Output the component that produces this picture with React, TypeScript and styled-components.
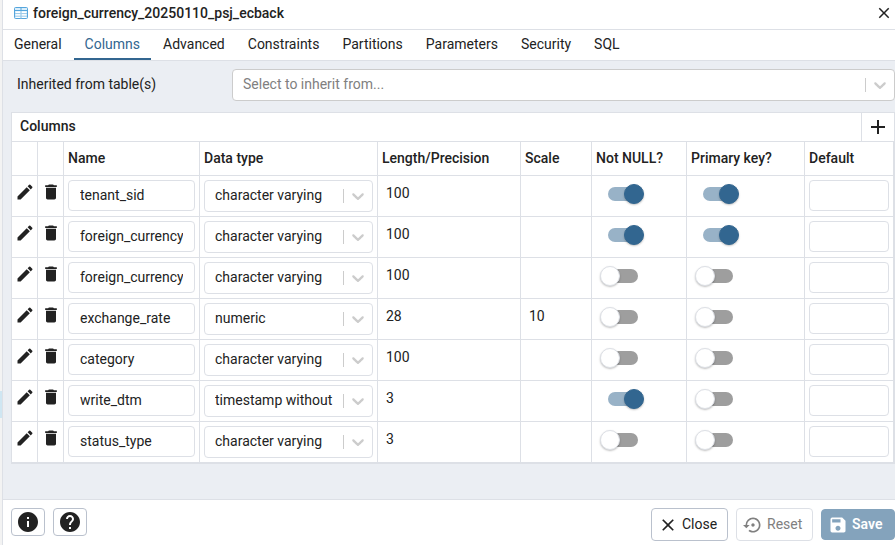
import React, { useState } from "react";
import styled, { createGlobalStyle } from "styled-components";
import {
  MdAdd,
  MdClose,
  MdDelete,
  MdEdit,
  MdHelp,
  MdInfo,
  MdSave,
  MdSettingsBackupRestore,
} from "react-icons/md";

const color = {
  text: "#222222",
  primary: "#326690",
  line: "#dde0e6",
  panel: "#ebeef3",
  control: "#cccccc",
  button: "#bac1cd",
};

const GlobalStyle = createGlobalStyle`
  *, *::before, *::after { box-sizing: border-box; }
  body {
    margin: 0;
    background: #ffffff;
    color: ${color.text};
    font-family: Roboto, "Liberation Sans", sans-serif;
    font-size: 14px;
    line-height: 20px;
  }
  button, input, select { font: inherit; color: inherit; margin: 0; }
`;

const Page = styled.div`
  display: flex;
  min-height: 100vh;
  overflow: hidden;
`;

const Backdrop = styled.div`
  display: flex;
  flex: 0 0 3px;
  flex-direction: column;
  padding-top: 391px;
  background: #f3f3f3;
  border-right: 1px solid ${color.line};
`;

const BackdropSelection = styled.div`
  height: 27px;
  background: #cfe6f2;
`;

const Dialog = styled.main`
  display: flex;
  flex: 1;
  flex-direction: column;
  min-width: 0;
`;

const TitleBar = styled.header`
  display: flex;
  align-items: center;
  gap: 4px;
  height: 30px;
  padding: 0 2px 3px 11px;
  border-bottom: 1px solid ${color.line};
`;

const Title = styled.h1`
  flex: 1;
  margin: 0;
  font-size: 14px;
  font-weight: 500;
`;

const PlainButton = styled.button`
  display: flex;
  align-items: center;
  justify-content: center;
  padding: 0;
  border: 0;
  background: none;
  cursor: pointer;
`;

const TabBar = styled.nav`
  display: flex;
  gap: 1px;
  height: 31px;
  border-bottom: 1px solid ${color.line};
`;

const Tab = styled.button<{ $active: boolean }>`
  padding: 0 11px;
  border: 0;
  border-bottom: 2px solid ${(p) => (p.$active ? color.primary : "transparent")};
  background: none;
  color: ${(p) => (p.$active ? color.primary : color.text)};
  cursor: pointer;
`;

const Body = styled.section`
  flex: 1;
  padding: 8px 0 35px 8px;
  background: ${color.panel};
`;

const Field = styled.div`
  display: flex;
  margin-bottom: 11px;
`;

const FieldLabel = styled.label`
  flex: 0 0 221px;
  padding: 5px 6px;
`;

const SelectBox = styled.div<{ $strong?: boolean }>`
  display: flex;
  position: relative;
  flex: 1;
  height: 32px;
  border: 1px solid ${(p) => (p.$strong ? color.control : color.line)};
  border-radius: 4px;
  background: #ffffff;
  color: ${(p) => (p.$strong ? "#808080" : color.text)};
`;

const Select = styled.select`
  width: 100%;
  min-width: 0;
  padding: 0 0 2px;
  border: 0;
  border-left: 10px solid transparent;
  border-right: 38px solid transparent;
  outline: 0;
  background: transparent;
  appearance: none;
`;

const SelectArrow = styled.span`
  display: flex;
  position: absolute;
  top: 8px;
  right: 4px;
  align-items: center;
  height: 14px;
  padding-left: 4px;
  border-left: 1px solid ${color.control};
  color: ${color.control};
  pointer-events: none;
`;

const Grid = styled.section`
  border: 1px solid ${color.line};
  background: #ffffff;
`;

const GridHeader = styled.div`
  display: flex;
  height: 29px;
  border-bottom: 1px solid ${color.line};
`;

const GridTitle = styled.h2`
  flex: 1;
  margin: 0;
  padding: 3px 8px;
  font-size: 14px;
  font-weight: 500;
`;

const AddButton = styled(PlainButton)`
  width: 33px;
  border-left: 1px solid ${color.line};
`;

const Table = styled.table`
  width: 100%;
  table-layout: fixed;
  border-collapse: separate;
  border-spacing: 0;
`;

const Col = styled.col<{ $width?: number }>`
  width: ${(p) => (p.$width ? `${p.$width}px` : "auto")};
`;

const HeadCell = styled.th`
  height: 34px;
  padding: 0 4px 2px;
  border-right: 1px solid ${color.line};
  border-bottom: 1px solid ${color.line};
  font-weight: 500;
  text-align: left;
  white-space: nowrap;
`;

const Cell = styled.td<{ $pad?: string }>`
  height: 41px;
  padding: ${(p) => p.$pad || "4px"};
  border-right: 1px solid ${color.line};
  border-bottom: 1px solid ${color.line};
  vertical-align: top;
`;

const TextInput = styled.input`
  display: block;
  width: 100%;
  height: 31px;
  padding: 0 11px 2px;
  border: 1px solid ${color.line};
  border-radius: 4px;
  outline: 0;
  background: #ffffff;
`;

const Switch = styled.input`
  display: block;
  position: relative;
  width: 44px;
  height: 20px;
  appearance: none;
  cursor: pointer;

  &::before {
    content: "";
    position: absolute;
    top: 3px;
    left: 8px;
    width: 30px;
    height: 14px;
    border-radius: 7px;
    background: #9e9e9e;
  }
  &::after {
    content: "";
    position: absolute;
    top: 0;
    left: 0;
    width: 20px;
    height: 20px;
    border: 1px solid ${color.line};
    border-radius: 50%;
    background: #ffffff;
    box-shadow: 0 1px 2px rgba(0, 0, 0, 0.25);
  }
  &:checked::before { background: #98b2c7; }
  &:checked::after {
    left: 24px;
    border-color: ${color.primary};
    background: ${color.primary};
  }
`;

const Footer = styled.footer`
  display: flex;
  align-items: flex-start;
  gap: 8px;
  height: 46px;
  padding: 8px 0 0 8px;
  border-top: 1px solid ${color.line};
`;

const IconButton = styled(PlainButton)`
  width: 34px;
  height: 28px;
  border: 1px solid ${color.button};
  border-radius: 4px;
`;

const Spacer = styled.div`
  flex: 1;
`;

const ActionButton = styled.button`
  display: flex;
  align-items: center;
  gap: 4px;
  width: 77px;
  height: 33px;
  padding: 0 6px 2px;
  border: 1px solid ${color.button};
  border-radius: 4px;
  background: #ffffff;
  cursor: pointer;

  &:disabled {
    border-color: ${color.line};
    color: #808080;
    cursor: default;
  }
`;

const SaveButton = styled(ActionButton)`
  width: 74px;
  height: 31px;
  margin-top: 1px;
  background: #84a3bc;
  font-weight: 600;

  &:disabled {
    border-color: #84a3bc;
    color: #ffffff;
  }
`;

const ActionIcon = styled.span`
  display: flex;
  padding-top: 2px;
`;

function Chevron() {
  return (
    <svg width="20" height="20" viewBox="0 0 20 20" fill="currentColor" aria-hidden="true">
      <path d="M4.516 7.548c0.436-0.446 1.043-0.481 1.576 0l3.908 3.747 3.908-3.747c0.533-0.481 1.141-0.446 1.574 0 0.436 0.445 0.408 1.197 0 1.615-0.406 0.418-4.695 4.502-4.695 4.502-0.217 0.223-0.502 0.335-0.787 0.335s-0.57-0.112-0.789-0.335c0 0-4.287-4.084-4.695-4.502s-0.436-1.17 0-1.615z" />
    </svg>
  );
}

function TableIcon() {
  return (
    <svg width="15" height="14" viewBox="0 0 15 14" aria-hidden="true">
      <rect x="0.5" y="1.5" width="13" height="11" rx="1" fill="#d9eefb" stroke="#55a5dc" />
      <path d="M2 6.2h4.2M8 6.2h4.2M2 9h4.2M8 9h4.2M2 11.3h4.2M8 11.3h4.2" stroke="#ffffff" strokeWidth="1.4" />
      <path d="M1 4.5h12" stroke="#55a5dc" />
      <path d="M1 7.5h12M1 10.2h12M7 5v7.5" stroke="#9fcbe9" />
      <path d="M7 2v3" stroke="#55a5dc" />
    </svg>
  );
}

type Row = {
  name: string;
  type: string;
  length: string;
  scale: string;
  notNull: boolean;
  primary: boolean;
};

const rows: Row[] = [
  { name: "tenant_sid", type: "character varying", length: "100", scale: "", notNull: true, primary: true },
  { name: "foreign_currency", type: "character varying", length: "100", scale: "", notNull: true, primary: true },
  { name: "foreign_currency", type: "character varying", length: "100", scale: "", notNull: false, primary: false },
  { name: "exchange_rate", type: "numeric", length: "28", scale: "10", notNull: false, primary: false },
  { name: "category", type: "character varying", length: "100", scale: "", notNull: false, primary: false },
  { name: "write_dtm", type: "timestamp without time zone", length: "3", scale: "", notNull: true, primary: false },
  { name: "status_type", type: "character varying", length: "3", scale: "", notNull: false, primary: false },
];

const types = ["character varying", "numeric", "timestamp without time zone"];
const tabs = ["General", "Columns", "Advanced", "Constraints", "Partitions", "Parameters", "Security", "SQL"];
const heads = ["", "", "Name", "Data type", "Length/Precision", "Scale", "Not NULL?", "Primary key?", "Default"];
const widths = [26, 26, 136, 178, 143, 71, 95, 118, undefined];

function ColumnRow({ row }: { row: Row }) {
  return (
    <tr>
      <Cell $pad="6px 3px">
        <PlainButton aria-label={`Edit ${row.name}`}><MdEdit size={20} /></PlainButton>
      </Cell>
      <Cell $pad="6px 3px">
        <PlainButton aria-label={`Delete ${row.name}`}><MdDelete size={20} /></PlainButton>
      </Cell>
      <Cell>
        <TextInput aria-label="Name" defaultValue={row.name} />
      </Cell>
      <Cell>
        <SelectBox>
          <Select aria-label="Data type" defaultValue={row.type}>
            {types.map((t) => <option key={t}>{t}</option>)}
          </Select>
          <SelectArrow><Chevron /></SelectArrow>
        </SelectBox>
      </Cell>
      <Cell $pad="7px 8px">{row.length}</Cell>
      <Cell $pad="7px 8px">{row.scale}</Cell>
      <Cell $pad="8px">
        <Switch type="checkbox" aria-label="Not NULL?" defaultChecked={row.notNull} />
      </Cell>
      <Cell $pad="8px">
        <Switch type="checkbox" aria-label="Primary key?" defaultChecked={row.primary} />
      </Cell>
      <Cell>
        <TextInput aria-label="Default" />
      </Cell>
    </tr>
  );
}

export default function App() {
  const [active, setActive] = useState("Columns");
  return (
    <>
      <GlobalStyle />
      <Page>
        <Backdrop><BackdropSelection /></Backdrop>
        <Dialog>
          <TitleBar>
            <TableIcon />
            <Title>foreign_currency_20250110_psj_ecback</Title>
            <PlainButton aria-label="Close dialog"><MdClose size={18} /></PlainButton>
          </TitleBar>
          <TabBar>
            {tabs.map((t) => (
              <Tab key={t} $active={t === active} onClick={() => setActive(t)}>{t}</Tab>
            ))}
          </TabBar>
          <Body>
            <Field>
              <FieldLabel htmlFor="inherit">Inherited from table(s)</FieldLabel>
              <SelectBox $strong>
                <Select id="inherit"><option>Select to inherit from...</option></Select>
                <SelectArrow><Chevron /></SelectArrow>
              </SelectBox>
            </Field>
            <Grid>
              <GridHeader>
                <GridTitle>Columns</GridTitle>
                <AddButton aria-label="Add column"><MdAdd size={24} /></AddButton>
              </GridHeader>
              <Table>
                <colgroup>{widths.map((w, i) => <Col key={i} $width={w} />)}</colgroup>
                <thead>
                  <tr>{heads.map((h, i) => <HeadCell key={i}>{h}</HeadCell>)}</tr>
                </thead>
                <tbody>{rows.map((r, i) => <ColumnRow key={i} row={r} />)}</tbody>
              </Table>
            </Grid>
          </Body>
          <Footer>
            <IconButton aria-label="Information"><MdInfo size={24} /></IconButton>
            <IconButton aria-label="Help"><MdHelp size={24} /></IconButton>
            <Spacer />
            <ActionButton><ActionIcon><MdClose size={20} /></ActionIcon>Close</ActionButton>
            <ActionButton disabled><ActionIcon><MdSettingsBackupRestore size={20} /></ActionIcon>Reset</ActionButton>
            <SaveButton disabled><ActionIcon><MdSave size={20} /></ActionIcon>Save</SaveButton>
          </Footer>
        </Dialog>
      </Page>
    </>
  );
}
